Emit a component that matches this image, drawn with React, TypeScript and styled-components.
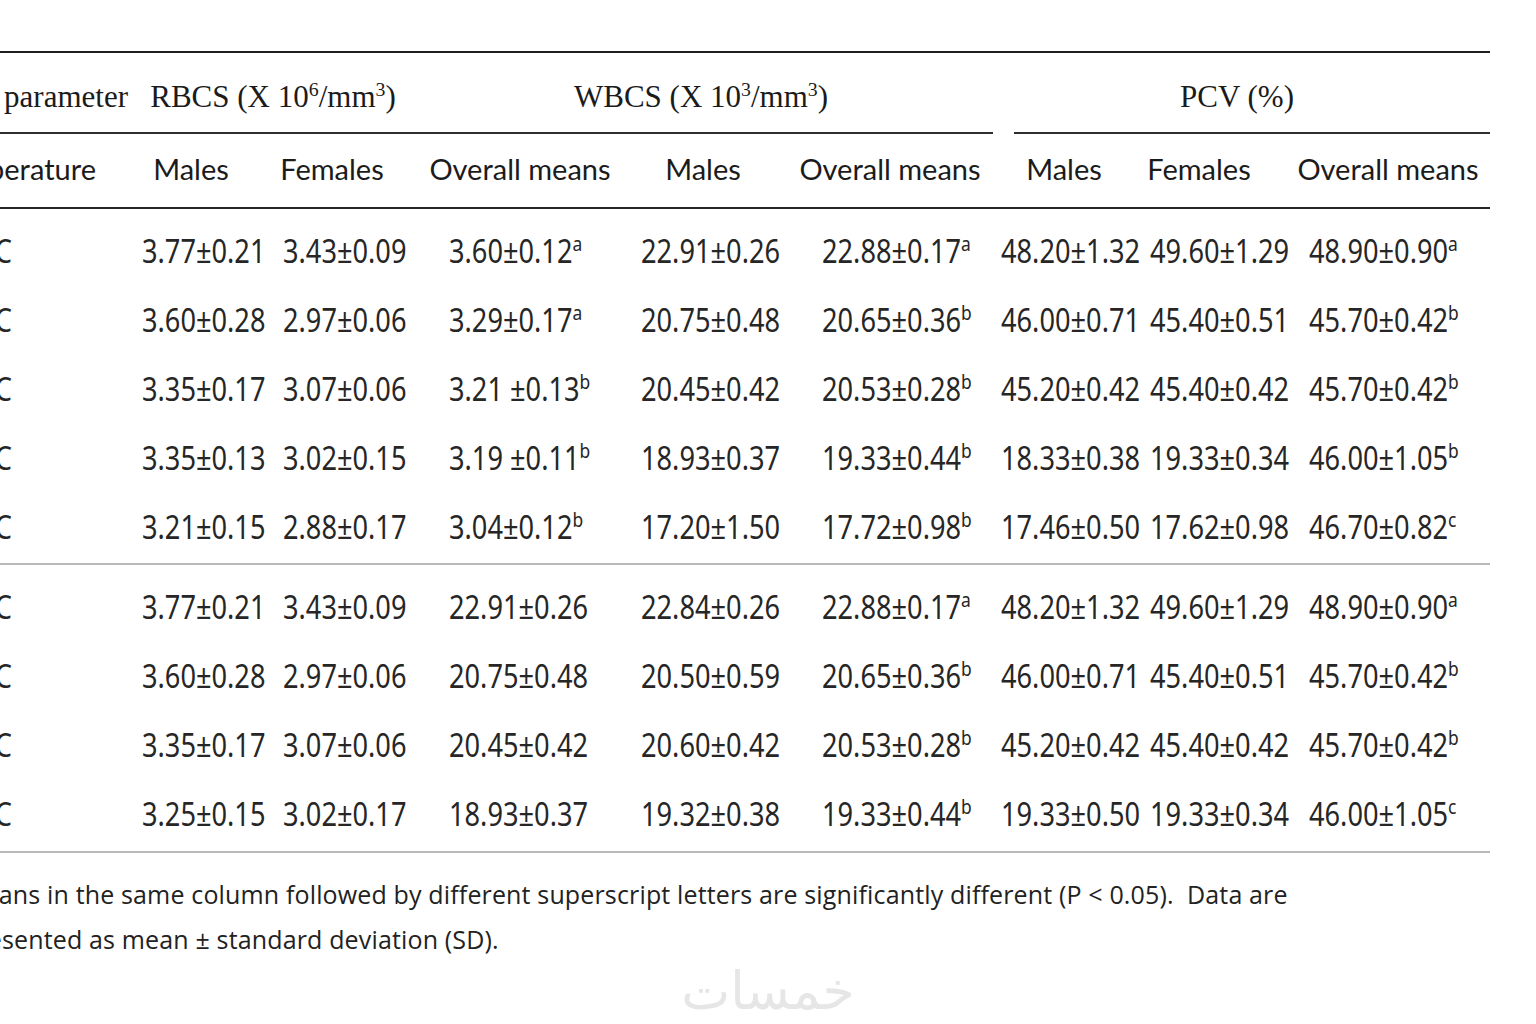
import React from "react";
import styled, { createGlobalStyle } from "styled-components";

// ==================== 型定義 ====================

type RowData = {
  temp: string;
  values: string[]; // "3.60±0.12^a" の形式、^ 以降は上付き文字
};

// ==================== データ ====================

const sectionA: RowData[] = [
  { temp: "25 °C", values: ["3.77±0.21", "3.43±0.09", "3.60±0.12^a", "22.91±0.26", "22.88±0.17^a", "48.20±1.32", "49.60±1.29", "48.90±0.90^a"] },
  { temp: "28 °C", values: ["3.60±0.28", "2.97±0.06", "3.29±0.17^a", "20.75±0.48", "20.65±0.36^b", "46.00±0.71", "45.40±0.51", "45.70±0.42^b"] },
  { temp: "31 °C", values: ["3.35±0.17", "3.07±0.06", "3.21 ±0.13^b", "20.45±0.42", "20.53±0.28^b", "45.20±0.42", "45.40±0.42", "45.70±0.42^b"] },
  { temp: "34 °C", values: ["3.35±0.13", "3.02±0.15", "3.19 ±0.11^b", "18.93±0.37", "19.33±0.44^b", "18.33±0.38", "19.33±0.34", "46.00±1.05^b"] },
  { temp: "37 °C", values: ["3.21±0.15", "2.88±0.17", "3.04±0.12^b", "17.20±1.50", "17.72±0.98^b", "17.46±0.50", "17.62±0.98", "46.70±0.82^c"] },
];

const sectionB: RowData[] = [
  { temp: "25 °C", values: ["3.77±0.21", "3.43±0.09", "22.91±0.26", "22.84±0.26", "22.88±0.17^a", "48.20±1.32", "49.60±1.29", "48.90±0.90^a"] },
  { temp: "28 °C", values: ["3.60±0.28", "2.97±0.06", "20.75±0.48", "20.50±0.59", "20.65±0.36^b", "46.00±0.71", "45.40±0.51", "45.70±0.42^b"] },
  { temp: "31 °C", values: ["3.35±0.17", "3.07±0.06", "20.45±0.42", "20.60±0.42", "20.53±0.28^b", "45.20±0.42", "45.40±0.42", "45.70±0.42^b"] },
  { temp: "34 °C", values: ["3.25±0.15", "3.02±0.17", "18.93±0.37", "19.32±0.38", "19.33±0.44^b", "19.33±0.50", "19.33±0.34", "46.00±1.05^c"] },
];

// 見出しと、その中央からのずれ（px）
const subHeads: { label: string; shift: number }[] = [
  { label: "Males", shift: 0 },
  { label: "Females", shift: 0 },
  { label: "Overall means", shift: 0 },
  { label: "Males", shift: 0 },
  { label: "Overall means", shift: 0 },
  { label: "Males", shift: 0 },
  { label: "Females", shift: 0 },
  { label: "Overall means", shift: 8 },
];

// 各列の数値の左余白（数値は左揃え、見出しは中央揃え）
const dataIndent = [10, 33, 35, 15, 42, 1, 22, 39];

// ==================== スタイル ====================

const GlobalStyle = createGlobalStyle`
  body {
    margin: 0;
    background: #ffffff;
  }
`;

const COLUMNS = "232px 118px 164px 212px 154px 220px 128px 142px 220px";

const Page = styled.div`
  width: 1536px;
  height: 1024px;
  overflow: hidden;
  background: #ffffff;
  padding-top: 51px;
  box-sizing: border-box;
  color: #1b1b1b;
`;

const Table = styled.div`
  width: 1590px;
  margin-left: -100px;
  border-top: 2px solid #1f1f1f;
`;

const GridRow = styled.div<{ $height: number }>`
  display: grid;
  grid-template-columns: ${COLUMNS};
  height: ${(p) => p.$height}px;
  align-items: center;
`;

const GroupHead = styled.div<{ $span: number; $shift?: number }>`
  grid-column: span ${(p) => p.$span};
  text-align: center;
  padding-top: 8px;
  padding-left: ${(p) => Math.max(0, p.$shift ?? 0)}px;
  padding-right: ${(p) => Math.max(0, -(p.$shift ?? 0))}px;
  font-family: "Liberation Serif", "Times New Roman", serif;
  font-size: 31px;
  white-space: nowrap;

  sup {
    font-size: 0.64em;
  }
`;

const FirstHead = styled.div<{ $pr: number; $serif?: boolean }>`
  text-align: right;
  padding-right: ${(p) => p.$pr}px;
  padding-top: ${(p) => (p.$serif ? 8 : 0)}px;
  font-family: ${(p) => (p.$serif ? '"Liberation Serif", "Times New Roman", serif' : 'Lato, "Open Sans", sans-serif')};
  font-size: ${(p) => (p.$serif ? 31 : 29)}px;
  white-space: nowrap;
`;

const RuleRow = styled.div`
  display: grid;
  grid-template-columns: ${COLUMNS};
`;

const Rule = styled.div<{ $from: number; $to: number; $ml?: number; $mr?: number }>`
  grid-column: ${(p) => p.$from} / ${(p) => p.$to};
  height: 2px;
  background: #2e2e2e;
  margin-left: ${(p) => p.$ml ?? 0}px;
  margin-right: ${(p) => p.$mr ?? 0}px;
`;

const SubHeadRow = styled(GridRow)`
  border-bottom: 2px solid #262626;
  padding-bottom: 5px;
  box-sizing: border-box;
`;

const SubHead = styled.div<{ $shift: number }>`
  text-align: center;
  padding-left: ${(p) => Math.max(0, p.$shift * 2)}px;
  padding-right: ${(p) => Math.max(0, -p.$shift * 2)}px;
  font-family: Lato, "Open Sans", sans-serif;
  font-size: 29px;
  white-space: nowrap;
`;

const Section = styled.div<{ $pt: number; $pb: number }>`
  padding-top: ${(p) => p.$pt}px;
  padding-bottom: ${(p) => p.$pb}px;
  border-bottom: 2px solid #b9b9b9;
`;

const Cell = styled.div<{ $first?: boolean; $indent?: number }>`
  display: flex;
  align-items: center;
  justify-content: ${(p) => (p.$first ? "flex-end" : "flex-start")};
  padding-left: ${(p) => p.$indent ?? 0}px;
  padding-right: ${(p) => (p.$first ? 120 : 0)}px;
  min-width: 0;
  font-family: "Noto Sans", "Open Sans", sans-serif;
  font-size: 32px;
  white-space: nowrap;
  color: #262626;
`;

// 参照の数字は縦長の書体なので横方向に詰める
const Narrow = styled.span<{ $origin: "left" | "right" }>`
  display: inline-block;
  flex-shrink: 0;
  transform: scaleX(0.85);
  transform-origin: ${(p) => p.$origin} center;
`;

const Sup = styled.sup`
  font-size: 0.64em;
  vertical-align: super;
  line-height: 0;
`;

const Footnote = styled.p`
  margin: 19px 0 0 -38px;
  font-family: "Open Sans", Lato, sans-serif;
  font-size: 25px;
  letter-spacing: 0.15px;
  line-height: 45px;
  white-space: nowrap;
  color: #222;
`;

const Watermark = styled.div`
  text-align: center;
  font-family: "DejaVu Sans", sans-serif;
  font-size: 52px;
  line-height: 58px;
  color: #e6e6e6;
  direction: rtl;
`;

// ==================== コンポーネント ====================

const Value: React.FC<{ text: string }> = ({ text }) => {
  const [num, sup] = text.split("^");
  return (
    <Narrow $origin="left">
      {num}
      {sup && <Sup>{sup}</Sup>}
    </Narrow>
  );
};

const DataSection: React.FC<{ rows: RowData[]; pt: number; pb: number }> = ({ rows, pt, pb }) => (
  <Section $pt={pt} $pb={pb}>
    {rows.map((row, i) => (
      <GridRow key={i} $height={69}>
        <Cell $first>
          <Narrow $origin="right">{row.temp}</Narrow>
        </Cell>
        {row.values.map((v, j) => (
          <Cell key={j} $indent={dataIndent[j]}>
            <Value text={v} />
          </Cell>
        ))}
      </GridRow>
    ))}
  </Section>
);

const App: React.FC = () => {
  return (
    <Page>
      <GlobalStyle />
      <Table>
        <GridRow $height={79}>
          <FirstHead $pr={4} $serif>
            Blood parameter
          </FirstHead>
          <GroupHead $span={2}>
            RBCS (X 10<sup>6</sup>/mm<sup>3</sup>)
          </GroupHead>
          <GroupHead $span={3} $shift={-12}>
            WBCS (X 10<sup>3</sup>/mm<sup>3</sup>)
          </GroupHead>
          <GroupHead $span={3} $shift={-16}>
            PCV (%)
          </GroupHead>
        </GridRow>
        <RuleRow>
          <Rule $from={1} $to={7} $mr={7} />
          <Rule $from={7} $to={10} $ml={14} />
        </RuleRow>
        <SubHeadRow $height={75}>
          <FirstHead $pr={36}>Temperature</FirstHead>
          {subHeads.map((h, i) => (
            <SubHead key={i} $shift={h.shift}>
              {h.label}
            </SubHead>
          ))}
        </SubHeadRow>
        <DataSection rows={sectionA} pt={7} pb={2} />
        <DataSection rows={sectionB} pt={7} pb={3} />
      </Table>
      <Footnote>
        Means in the same column followed by different superscript letters are significantly different (P &lt; 0.05).&nbsp; Data are
        <br />
        presented as mean ± standard deviation (SD).
      </Footnote>
      <Watermark>خمسات</Watermark>
    </Page>
  );
};

export default App;
